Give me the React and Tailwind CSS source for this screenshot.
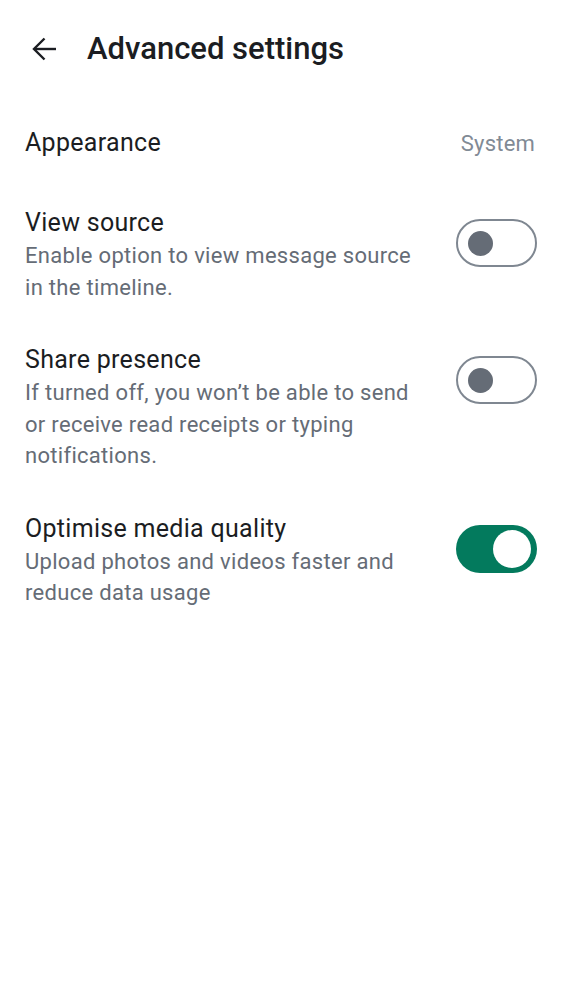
const Toggle = ({ on }) => (
  <div
    className={`mt-[13px] flex h-[48px] w-[81px] shrink-0 items-center rounded-full ${
      on ? "bg-[#037a5d] justify-end pr-[6px]" : "border-[2.5px] border-[#7f8791] bg-white pl-[10px]"
    }`}
  >
    <div
      className={`rounded-full ${on ? "h-[38px] w-[38px] bg-white" : "h-[25px] w-[25px] bg-[#656c76]"}`}
    />
  </div>
)

const ToggleRow = ({ title, desc, on }) => (
  <div className="flex items-start pl-[25px] pr-[25px]">
    <div className="w-[400px] shrink-0 pr-[6px]">
      <p className="text-[25px] leading-[34px] tracking-[0.3px] text-[#1b1d22]">{title}</p>
      <p className="text-[22px] leading-[31.5px] tracking-[0.3px] text-[#656c76]">{desc}</p>
    </div>
    <div className="flex-1" />
    <Toggle on={on} />
  </div>
)

export default function App() {
  return (
    <div className="min-h-screen bg-white font-['Roboto',sans-serif]">
      {/* Header */}
      <div className="flex h-[98px] items-center gap-[30px] pl-[31px]">
        <svg width="26" height="26" viewBox="0 0 26 26" fill="none" stroke="#1b1d22" strokeWidth="2.4" strokeLinecap="butt" strokeLinejoin="miter">
          <path d="M25 13H3" />
          <path d="M13.5 2.5 3 13l10.5 10.5" />
        </svg>
        <h1 className="text-[31px] font-medium text-[#1b1d22]">Advanced settings</h1>
      </div>

      {/* Appearance */}
      <div className="flex h-[90px] items-center justify-between pl-[25px] pr-[27px]">
        <span className="text-[25px] tracking-[0.3px] text-[#1b1d22]">Appearance</span>
        <span className="text-[22px] tracking-[0.2px] text-[#818a95]">System</span>
      </div>

      <div className="flex flex-col gap-[40px] pt-[18px]">
        <ToggleRow
          title="View source"
          desc="Enable option to view message source in the timeline."
        />
        <ToggleRow
          title="Share presence"
          desc="If turned off, you won’t be able to send or receive read receipts or typing notifications."
        />
        <ToggleRow
          title="Optimise media quality"
          desc="Upload photos and videos faster and reduce data usage"
          on
        />
      </div>
    </div>
  )
}
